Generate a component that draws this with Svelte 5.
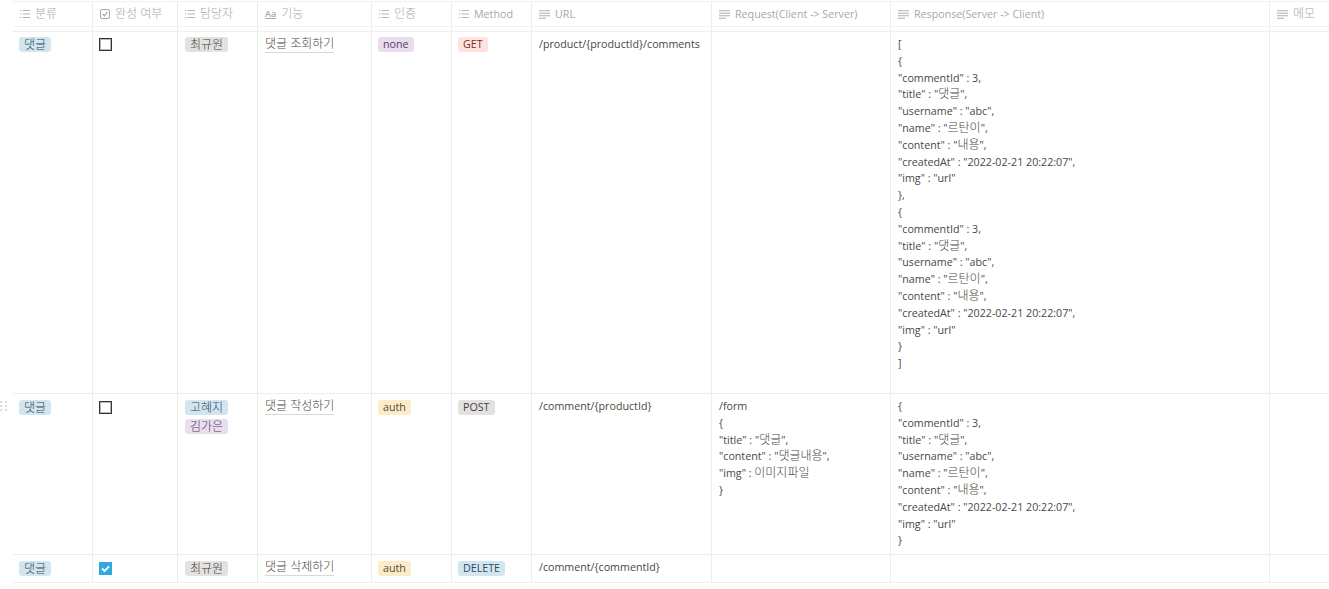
<script>
  const columns = [
    { label: '분류', icon: 'list' },
    { label: '완성 여부', icon: 'check' },
    { label: '담당자', icon: 'list' },
    { label: '기능', icon: 'title' },
    { label: '인증', icon: 'list' },
    { label: 'Method', icon: 'list' },
    { label: 'URL', icon: 'text' },
    { label: 'Request(Client -> Server)', icon: 'text' },
    { label: 'Response(Server -> Client)', icon: 'text' },
    { label: '메모', icon: 'text' }
  ];

  const comment = [
    '"commentId" : 3,',
    '"title" : "댓글",',
    '"username" : "abc",',
    '"name" : "르탄이",',
    '"content" : "내용",',
    '"createdAt" : "2022-02-21 20:22:07",',
    '"img" : "url"'
  ];

  const rows = [
    {
      height: 361,
      done: false,
      people: [['최규원', 'gray']],
      name: '댓글 조회하기',
      auth: ['none', 'purple'],
      method: ['GET', 'red'],
      url: '/product/{productId}/comments',
      request: [],
      response: ['[', '{', ...comment, '},', '{', ...comment, '}', ']']
    },
    {
      height: 160,
      handle: true,
      done: false,
      people: [['고혜지', 'blue'], ['김가은', 'purple']],
      name: '댓글 작성하기',
      auth: ['auth', 'yellow'],
      method: ['POST', 'gray'],
      url: '/comment/{productId}',
      request: ['/form', '{', '"title" : "댓글",', '"content" : "댓글내용",', '"img" : 이미지파일', '}'],
      response: ['{', ...comment, '}']
    },
    {
      height: 27,
      done: true,
      people: [['최규원', 'gray']],
      name: '댓글 삭제하기',
      auth: ['auth', 'yellow'],
      method: ['DELETE', 'blue'],
      url: '/comment/{commentId}',
      request: [],
      response: []
    }
  ];

  // hangul runs are set a bit larger than the latin around them
  const hangul = (str) => str.split(/([가-힣]+(?: [가-힣]+)*)/);
</script>

{#snippet mixed(str)}
  {#each hangul(str) as part, i}{#if i % 2}<span class="ko">{part}</span>{:else}{part}{/if}{/each}
{/snippet}

{#snippet tag(item)}
  <span class="tag {item[1]}">{@render mixed(item[0])}</span>
{/snippet}

{#snippet lines(list)}
  {#each list as line}
    <div>{@render mixed(line)}</div>
  {/each}
{/snippet}

<main class="table">
  <div class="row head">
    {#each columns as col}
      <div class="cell">
        {#if col.icon === 'list'}
          <svg viewBox="0 0 10 8" width="10" height="8">
            <path d="M0 .5h1.2M0 4h1.2M0 7.5h1.2M2.6 .5H10M2.6 4H10M2.6 7.5H10" stroke="#b5b5b3" fill="none" />
          </svg>
        {:else if col.icon === 'check'}
          <svg viewBox="0 0 10 10" width="10" height="10">
            <rect x=".5" y=".5" width="9" height="9" rx="1.5" stroke="#a8a8a6" fill="none" />
            <path d="M2.6 5l1.8 1.8L7.5 3.2" stroke="#a8a8a6" stroke-width="1.2" fill="none" />
          </svg>
        {:else if col.icon === 'title'}
          <span class="aa">Aa</span>
        {:else}
          <svg viewBox="0 0 11 9" width="11" height="9">
            <path d="M0 .75h11M0 3.25h11M0 5.75h11M0 8.25h7" stroke="#b0b0ae" stroke-width="1.1" fill="none" />
          </svg>
        {/if}
        <span>{@render mixed(col.label)}</span>
      </div>
    {/each}
  </div>

  {#each rows as row, i}
    <div class="row" class:first={i === 0} style:height="{row.height}px">
      {#if row.handle}
        <svg class="handle" viewBox="0 0 8 10" width="8" height="10">
          <path d="M0 0h2v2H0zM5 0h2v2H5zM0 4h2v2H0zM5 4h2v2H5zM0 8h2v2H0zM5 8h2v2H5z" fill="#dcdcdb" />
        </svg>
      {/if}
      <div class="cell tags">{@render tag(['댓글', 'blue'])}</div>
      <div class="cell box">
        {#if row.done}
          <svg viewBox="0 0 13 13" width="13" height="13">
            <rect width="13" height="13" fill="#2eaadc" />
            <path d="M3 6.5l2.5 2.5L10.2 4.4" stroke="#fff" stroke-width="1.8" fill="none" />
          </svg>
        {:else}
          <span class="unchecked"></span>
        {/if}
      </div>
      <div class="cell tags stack">
        {#each row.people as person}
          {@render tag(person)}
        {/each}
      </div>
      <div class="cell txt"><span class="name">{@render mixed(row.name)}</span></div>
      <div class="cell tags">{@render tag(row.auth)}</div>
      <div class="cell tags">{@render tag(row.method)}</div>
      <div class="cell txt">{row.url}</div>
      <div class="cell txt">{@render lines(row.request)}</div>
      <div class="cell txt">{@render lines(row.response)}</div>
      <div class="cell"></div>
    </div>
  {/each}
</main>

<style>
  :global(body) {
    background: #fff;
  }

  .table {
    margin-left: 13px;
    padding-top: 1px;
    font-family: "Open Sans", "Noto Sans CJK KR", sans-serif;
    font-size: 10.7px;
    line-height: 16.8px;
    color: #4a4843;
  }

  .ko {
    font-size: 12px;
    font-weight: 300;
  }

  .row {
    position: relative;
    display: grid;
    grid-template-columns: 80px 85px 80px 114px 80px 80px 180px 179px 379px 59px;
    border-bottom: 1px solid #ededec;
  }

  .head {
    height: 29px;
    border-top: 1px solid #f1f1f0;
    color: #a9a8a5;
    background: linear-gradient(#f4f4f3, #f4f4f3) 0 24px / 100% 1px no-repeat;
  }

  .cell {
    border-right: 1px solid #ededec;
    min-width: 0;
  }

  .cell:last-child {
    border-right: 0;
  }

  .head .cell {
    display: flex;
    align-items: center;
    gap: 5px;
    padding: 0 0 5px 7px;
    white-space: nowrap;
  }

  .aa {
    font-size: 9px;
    line-height: 9px;
    font-weight: 600;
    color: #a8a8a6;
    border-bottom: 1px solid #a8a8a6;
  }

  .handle {
    position: absolute;
    left: -13px;
    top: 7px;
  }

  .tags {
    display: flex;
    align-items: flex-start;
    padding: 6px 6px 0;
  }

  .first .tags {
    padding-top: 5px;
  }

  .stack {
    flex-direction: column;
    gap: 4px;
    padding-left: 7px;
  }

  .tag {
    height: 15px;
    line-height: 15px;
    padding: 0 5px;
    border-radius: 3px;
    white-space: nowrap;
  }

  .blue { background: #d3e5ef; color: #2b4a5e; }
  .gray { background: #e3e2e0; color: #45433e; }
  .purple { background: #e8deee; color: #57396b; }
  .yellow { background: #fdecc8; color: #5c4630; }
  .red { background: #ffe2dd; color: #743330; }

  .box {
    padding: 7px 6px 0;
  }

  .first .box {
    padding-top: 6px;
  }

  .box svg {
    display: block;
  }

  .unchecked {
    display: block;
    width: 13px;
    height: 13px;
    box-sizing: border-box;
    border: 1px solid #37352f;
    box-shadow: inset 0 0 0 1px #b5b5b3;
  }

  .txt {
    padding: 4px 7px 0;
    white-space: nowrap;
  }

  .name {
    display: inline-block;
    line-height: 15px;
    border-bottom: 1px solid #d8d8d6;
  }
</style>
